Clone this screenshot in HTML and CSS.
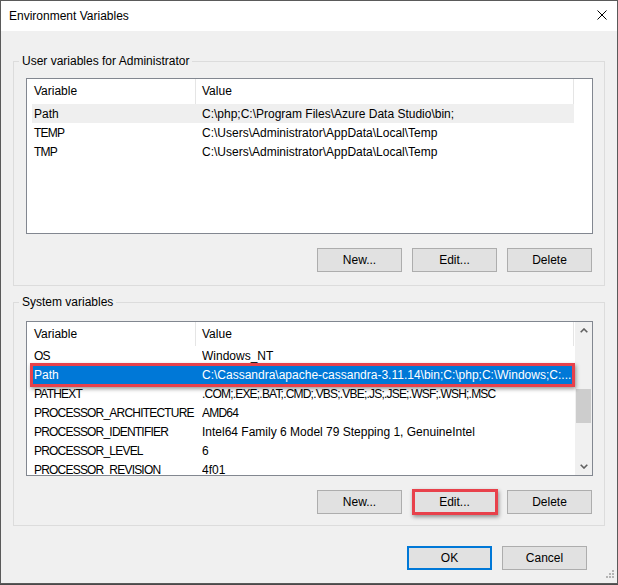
FILE: index.html
```html
<!DOCTYPE html>
<html lang="en">
<head>
  <meta charset="UTF-8" />
  <title>Environment Variables</title>
  <link rel="stylesheet" href="styles.css">
</head>
<body>

  <div class="window">
    <div class="titlebar">
      <span class="title">Environment Variables</span>
      <svg class="close" width="10" height="10" viewBox="0 0 10 10">
        <path d="M0.5 0.5 L9.5 9.5 M9.5 0.5 L0.5 9.5" stroke="#000" stroke-width="1" fill="none" />
      </svg>
    </div>

    <div class="content">
      <!-- Variáveis do usuário -->
      <fieldset class="group group-user">
        <legend>User variables for Administrator</legend>
        <div class="list list-user">
          <div class="list-main">
            <div class="list-head"><span>Variable</span><span>Value</span></div>
            <div class="row row-inactive"><span>Path</span><span>C:\php;C:\Program Files\Azure Data Studio\bin;</span></div>
            <div class="row"><span class="caps">TEMP</span><span>C:\Users\Administrator\AppData\Local\Temp</span></div>
            <div class="row"><span class="caps">TMP</span><span>C:\Users\Administrator\AppData\Local\Temp</span></div>
          </div>
        </div>
        <div class="buttons">
          <button class="btn">New...</button>
          <button class="btn">Edit...</button>
          <button class="btn">Delete</button>
        </div>
      </fieldset>

      <!-- Variáveis do sistema -->
      <fieldset class="group group-system">
        <legend>System variables</legend>
        <div class="list list-system">
          <div class="list-main">
            <div class="list-head"><span>Variable</span><span>Value</span></div>
            <div class="row"><span class="caps">OS</span><span>Windows_NT</span></div>
            <div class="row row-selected row-marked"><span>Path</span><span>C:\Cassandra\apache-cassandra-3.11.14\bin;C:\php;C:\Windows;C:...</span></div>
            <div class="row"><span class="caps">PATHEXT</span><span class="caps">.COM;.EXE;.BAT;.CMD;.VBS;.VBE;.JS;.JSE;.WSF;.WSH;.MSC</span></div>
            <div class="row"><span class="caps">PROCESSOR_ARCHITECTURE</span><span class="caps">AMD64</span></div>
            <div class="row"><span class="caps">PROCESSOR_IDENTIFIER</span><span>Intel64 Family 6 Model 79 Stepping 1, GenuineIntel</span></div>
            <div class="row"><span class="caps">PROCESSOR_LEVEL</span><span>6</span></div>
            <div class="row"><span class="caps">PROCESSOR_REVISION</span><span>4f01</span></div>
          </div>
          <div class="scrollbar">
            <div class="arrow">
              <svg width="8" height="5" viewBox="0 0 8 5"><path d="M0.7 4.3 L4 1 L7.3 4.3" stroke="#606060" stroke-width="1.6" fill="none" /></svg>
            </div>
            <div class="track-top"></div>
            <div class="thumb"></div>
            <div class="track-rest"></div>
            <div class="arrow">
              <svg width="8" height="5" viewBox="0 0 8 5"><path d="M0.7 0.7 L4 4 L7.3 0.7" stroke="#606060" stroke-width="1.6" fill="none" /></svg>
            </div>
          </div>
        </div>
        <div class="buttons">
          <button class="btn">New...</button>
          <button class="btn btn-marked">Edit...</button>
          <button class="btn">Delete</button>
        </div>
      </fieldset>

      <div class="dialog-buttons">
        <button class="btn btn-default">OK</button>
        <button class="btn">Cancel</button>
      </div>
    </div>

    <svg class="grip" width="10" height="10" viewBox="0 0 10 10">
      <rect x="8" y="0" width="2" height="2" fill="#b4b4b4" />
      <rect x="5" y="3" width="2" height="2" fill="#b4b4b4" />
      <rect x="8" y="3" width="2" height="2" fill="#b4b4b4" />
      <rect x="2" y="6" width="2" height="2" fill="#b4b4b4" />
      <rect x="5" y="6" width="2" height="2" fill="#b4b4b4" />
      <rect x="8" y="6" width="2" height="2" fill="#b4b4b4" />
    </svg>
  </div>

</body>
</html>
```

FILE: styles.css
```css
/* Janela estilo Windows 10 */
body {
  margin: 0;
  background: #4a4a4a;
}

.window {
  position: relative;
  width: 618px;
  height: 584px;
  box-sizing: border-box;
  border: 1px solid #5a5a5a;
  background: #f0f0f0;
  display: flex;
  flex-direction: column;
  font-family: "Liberation Sans", Arial, sans-serif;
  font-size: 12px;
  color: #000;
}

.titlebar {
  flex-shrink: 0;
  height: 30px;
  background: #fff;
  display: flex;
  align-items: center;
  justify-content: space-between;
  padding-left: 8px;
}

.close {
  margin-right: 10px;
  margin-bottom: 2px;
}

.content {
  padding: 0 12px 0 12px;
}

/* Caixas de grupo */
.group {
  margin: 23px 0 0;
  padding: 9px 11px 13px 12px;
  border: 1px solid #dcdcdc;
  min-width: 0;
}

.group legend {
  padding: 0 3px;
  margin-left: -7px;
  line-height: 15px;
}

.group-system {
  margin-top: 9px;
  padding-top: 11px;
  padding-bottom: 11px;
}

/* Listas */
.list {
  height: 156px;
  box-sizing: border-box;
  border: 1px solid #828790;
  background: #fff;
  display: flex;
  overflow: hidden;
}

.list-system {
  height: 155px;
}

.list-main {
  flex: 0 0 548px;
  box-sizing: border-box;
  padding: 0 1px 0 5px;
}

.list-head {
  display: grid;
  grid-template-columns: 163px 1fr;
  height: 24px;
  border-right: 1px solid #e5e5e5;
}

.list-user .list-head {
  height: 25px;
}

.list-head span {
  padding-left: 2px;
  line-height: 24px;
}

.list-head span + span {
  border-left: 1px solid #e5e5e5;
  padding-left: 6px;
}

.row {
  position: relative;
  display: grid;
  grid-template-columns: 170px 1fr;
  height: 19px;
  line-height: 20px;
}

.row span {
  white-space: nowrap;
  overflow: hidden;
}

.row span:first-child {
  padding-left: 2px;
}

/* maiúsculas do Segoe UI são mais estreitas */
.row .caps {
  letter-spacing: -0.8px;
}

.row-inactive {
  background: #efefef;
}

.row-selected {
  background: #0078d7;
  color: #fff;
}

/* Destaque vermelho */
.row-marked::after,
.btn-marked::after {
  content: "";
  position: absolute;
  border: 3px solid #e8414b;
  box-shadow: 1px 2px 4px rgba(0, 0, 0, 0.4);
  pointer-events: none;
}

.row-marked::after {
  top: -2px;
  left: -2px;
  right: -1px;
  bottom: -3px;
}

.btn-marked::after {
  top: -2px;
  left: -1px;
  right: -2px;
  bottom: -2px;
}

/* Barra de rolagem */
.scrollbar {
  flex: 0 0 17px;
  background: #f0f0f0;
  display: flex;
  flex-direction: column;
}

.arrow {
  height: 17px;
  display: flex;
  align-items: center;
  justify-content: center;
}

.track-top {
  height: 50px;
}

.thumb {
  height: 34px;
  margin: 0 1px;
  background: #cdcdcd;
}

.track-rest {
  flex: 1;
}

/* Botões */
.buttons {
  display: flex;
  justify-content: flex-end;
  gap: 10px;
  margin-top: 14px;
  padding-right: 1px;
}

.dialog-buttons {
  display: flex;
  justify-content: flex-end;
  gap: 10px;
  margin-top: 20px;
  padding-right: 18px;
}

.btn {
  position: relative;
  width: 85px;
  height: 24px;
  padding: 0;
  background: #e1e1e1;
  border: 1px solid #adadad;
  font-family: "Liberation Sans", Arial, sans-serif;
  font-size: 12px;
  color: #000;
}

.btn-default {
  border-color: #0078d7;
  box-shadow: inset 0 0 0 1px #0078d7;
}

.grip {
  position: absolute;
  right: 3px;
  bottom: 3px;
}
```
